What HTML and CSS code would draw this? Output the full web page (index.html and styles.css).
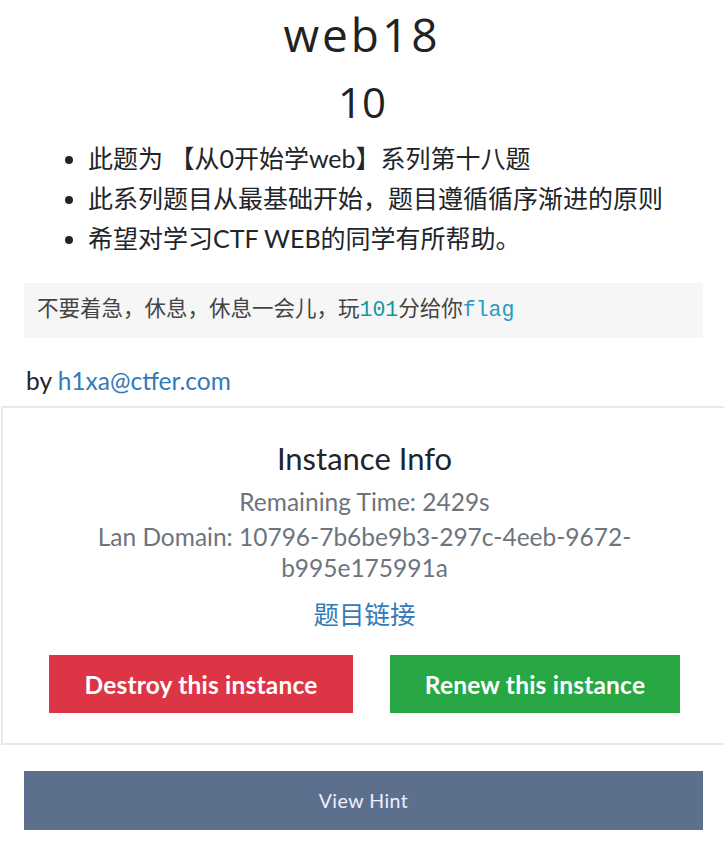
FILE: index.html
```html
<!DOCTYPE html>
<html>
<head>
<meta charset="utf-8">
<link rel="stylesheet" href="styles.css">
</head>
<body>
<div class="page">
  <h1 class="title">web18</h1>
  <h2 class="points">10</h2>
  <div class="desc">
    <ul class="intro">
      <li>此题为 【从0开始学web】系列第十八题</li>
      <li>此系列题目从最基础开始，题目遵循循序渐进的原则</li>
      <li>希望对学习CTF WEB的同学有所帮助。</li>
    </ul>
    <pre class="code">不要着急，休息，休息一会儿，玩<span class="num">101</span>分给你<span class="kw">flag</span></pre>
    <p class="author">by <a href="#">h1xa@ctfer.com</a></p>
  </div>
  <div class="card">
    <h3 class="card-title">Instance Info</h3>
    <p class="info">Remaining Time: 2429s</p>
    <p class="info">Lan Domain: 10796-7b6be9b3-297c-4eeb-9672-<br>b995e175991a</p>
    <p class="link-row"><a href="#">题目链接</a></p>
    <div class="actions">
      <button class="btn btn-red">Destroy this instance</button>
      <button class="btn btn-green">Renew this instance</button>
    </div>
  </div>
  <div class="hint-wrap">
    <button class="hint">View Hint</button>
  </div>
</div>
</body>
</html>
```

FILE: styles.css
```css
html, body {
  margin: 0;
  padding: 0;
  background: #fff;
  overflow: hidden;
}
body {
  font-family: Lato, "Noto Sans CJK SC", sans-serif;
  color: #212529;
}
.page {
  width: 724px;
  height: 851px;
}
.title {
  margin: 0;
  padding-top: 6px;
  height: 66px;
  text-align: center;
  font-family: "Open Sans", Lato, sans-serif;
  font-weight: 400;
  font-size: 46px;
  line-height: 56px;
  letter-spacing: 3px;
  color: #222;
}
.points {
  margin: 0;
  text-align: center;
  font-family: "Open Sans", Lato, sans-serif;
  font-weight: 400;
  font-size: 42px;
  line-height: 60px;
  color: #222;
}
.desc {
  padding: 0 21px 0 24px;
}
.intro {
  margin: 6px 0 0;
  padding-left: 64px;
  font-size: 25px;
  line-height: 40px;
  color: #212529;
}
.code {
  margin: 25px 0 0;
  background: #f6f6f6;
  padding: 14px 13px;
  height: 27px;
  font-family: "Liberation Mono", "Noto Sans CJK SC", monospace;
  font-size: 21.5px;
  line-height: 27px;
  color: #444;
}
.num { color: #15979b; }
.kw { color: #2a9bc2; }
.author {
  margin: 29px 0 0 2px;
  font-size: 24.5px;
  line-height: 28px;
}
.author a, .link-row a {
  color: #337ab7;
  text-decoration: none;
}
.card {
  margin: 11px 0 0 1px;
  border: 2px solid #e8e8e8;
  box-sizing: border-box;
  height: 339px;
  padding-top: 32px;
  text-align: center;
  width: 740px;
}
.card > * { width: 723px; }
.card-title {
  margin: 0 0 10px;
  font-weight: 400;
  font-size: 31px;
  line-height: 36px;
  color: #212529;
}
.info {
  margin: 0;
  font-size: 24.5px;
  line-height: 31px;
  color: #6c757d;
  padding-bottom: 4px;
}
.link-row {
  margin: 10px 0 0;
  font-size: 25.5px;
  line-height: 34px;
}
.actions {
  display: flex;
  gap: 37px;
  padding-left: 46px;
  margin-top: 24px;
}
.btn {
  border: none;
  height: 58px;
  color: #fff;
  font-family: Lato, sans-serif;
  font-weight: 700;
  font-size: 24.5px;
  letter-spacing: 0.2px;
}
.btn-red { background: #dc3545; width: 304px; }
.btn-green { background: #28a745; width: 290px; }
.hint-wrap {
  padding: 26px 21px 0 24px;
}
.hint {
  display: block;
  width: 100%;
  height: 59px;
  border: none;
  background: #5c708e;
  color: #eef;
  font-family: Lato, sans-serif;
  font-size: 19.5px;
  letter-spacing: 0.5px;
}
```
